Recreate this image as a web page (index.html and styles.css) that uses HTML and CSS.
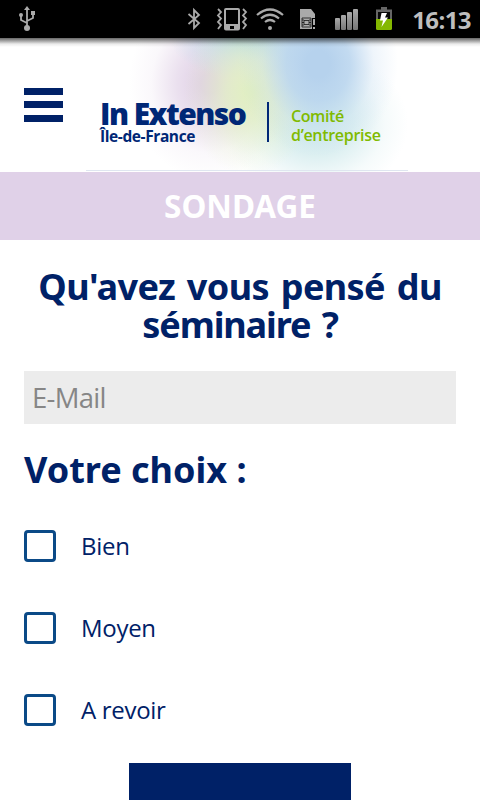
FILE: index.html
```html
<!DOCTYPE html>
<html lang="fr">
  <head>
    <meta charset="UTF-8" />
    <meta name="viewport" content="width=device-width, initial-scale=1.0" />
    <title>Sondage - In Extenso</title>
    <link rel="stylesheet" href="styles.css">
  </head>
  <body>
    <!-- Barre système -->
    <div class="statusbar">
      <svg class="status-icons" width="400" height="38" viewBox="0 0 400 38" fill="none" stroke="#aaa" stroke-width="1.8">
        <!-- USB -->
        <path d="M27 9v19M27 23l-6-3v-5M27 21l6-3v-5" />
        <path d="M27 6l3 4h-6z" fill="#aaa" stroke="none" />
        <circle cx="27" cy="28" r="3" fill="#aaa" stroke="none" />
        <circle cx="21" cy="15" r="2" fill="#aaa" stroke="none" />
        <path d="M31 11h4v4h-4z" fill="#aaa" stroke="none" />
        <!-- Bluetooth -->
        <path d="M188.500 14l10.500 9-5 5V10l5 5-10.500 9" />
        <!-- Vibreur -->
        <path d="M218 9l3 3-3 3.500 3 3-3 3.500 3 3-3 4M243 9l3 3-3 3.500 3 3-3 3.500 3 3-3 4" />
        <rect x="225" y="9" width="14" height="20.500" rx="1" stroke-width="2" />
        <path d="M225 24h14v6h-14z" fill="#aaa" stroke="none" />
        <path d="M230 26h4v3h-4z" fill="#000" stroke="none" />
        <!-- Wifi -->
        <path d="M257 15q13-11 26 0M261 18.500q9-7.500 18 0M265 22q5-4 10 0" stroke-width="2.200" />
        <circle cx="270" cy="28" r="2" fill="#aaa" stroke="none" />
        <!-- Carte SIM -->
        <path d="M300 9h11l4 5v4h-3v11h-12z" fill="#aaa" stroke="none" />
        <path d="M302 18h9v9h-9zM304 20.500h5v4h-5zM302 20h2M302 22.500h2M302 25h2M309 20h2M309 22.500h2M309 25h2" stroke="#000" stroke-width="0.700" />
        <path d="M314 19v6M314 27v2" stroke-width="2" />
        <!-- Réseau -->
        <g fill="url(#bar)" stroke="none">
          <rect x="335" y="18" width="5" height="12" rx="1" />
          <rect x="341" y="15" width="5" height="15" rx="1" />
          <rect x="347" y="12" width="5" height="18" rx="1" />
          <rect x="353" y="9" width="5" height="21" rx="1" />
        </g>
        <!-- Batterie -->
        <path d="M381 7h6v2.500h5V19h-16V9.500h5z" fill="#666" stroke="none" />
        <path d="M378 12h12v7h-12z" fill="#080808" stroke="none" />
        <path d="M376 19h16v9.500q0 1.500-1.500 1.500h-13q-1.500 0-1.500-1.500z" fill="#84b800" stroke="none" />
        <path d="M381.500 13h5.500l-2 4.500h3l-6.500 9.500 1.500-6.500h-3z" fill="#fff" stroke="none" />
        <defs>
          <linearGradient id="bar" x2="0" y2="1">
            <stop stop-color="#aaa" />
            <stop offset="1" stop-color="#777" />
          </linearGradient>
        </defs>
      </svg>
      <span class="clock">16:13</span>
    </div>

    <!-- En-tête -->
    <header class="header">
      <button class="menu" aria-label="Menu">
        <span></span>
        <span></span>
        <span></span>
      </button>
      <div class="logo">
        <div class="brand">
          <div class="brand-name">In Extenso</div>
          <div class="brand-region">Île-de-France</div>
        </div>
        <div class="comite">
          <div class="comite-top">Comité</div>
          <div class="comite-bottom">d’entreprise</div>
        </div>
      </div>
    </header>

    <h1 class="banner">SONDAGE</h1>

    <!-- Formulaire -->
    <main class="content">
      <form>
        <h2 class="question"><span class="q1">Qu'avez vous pensé du</span><span class="q2">séminaire ?</span></h2>
        <input class="email" type="text" name="email" placeholder="E-Mail" />
        <h2 class="choice-title">Votre choix :</h2>
        <label class="choice"><input type="checkbox" name="bien" /><span>Bien</span></label>
        <label class="choice"><input type="checkbox" name="moyen" /><span>Moyen</span></label>
        <label class="choice"><input type="checkbox" name="revoir" /><span>A revoir</span></label>
        <button class="submit" type="submit" aria-label="Valider"></button>
      </form>
    </main>
  </body>
</html>
```

FILE: styles.css
```css
/* Styles de base */
* {
  box-sizing: border-box;
  margin: 0;
  padding: 0;
}

body {
  width: 480px;
  height: 800px;
  overflow: hidden;
  font-family: "Open Sans", "Noto Sans", sans-serif;
  background-color: #fff;
  color: #002167;
}

/* Barre système */
.statusbar {
  display: flex;
  justify-content: space-between;
  height: 38px;
  background-color: #000;
}

.status-icons {
  display: block;
}

.clock {
  padding-right: 9px;
  font-size: 24px;
  font-weight: 700;
  line-height: 39px;
  letter-spacing: -0.6px;
  color: #bebebe;
}

/* En-tête */
.header {
  display: flex;
  align-items: flex-start;
  height: 134px;
  padding-left: 24px;
  background:
    linear-gradient(rgba(0, 0, 0, 0.6), rgba(0, 0, 0, 0.35) 3px, rgba(0, 0, 0, 0.08) 6px, transparent 9px),
    linear-gradient(#dfe6f0, #dfe6f0) 86px 132px / 322px 1px no-repeat,
    radial-gradient(ellipse 80px 92px at 318px 26px, rgba(182, 210, 237, 1) 15%, rgba(184, 212, 238, 0.85) 40%, rgba(190, 215, 240, 0.25) 70%, rgba(190, 215, 240, 0) 100%),
    radial-gradient(ellipse 66px 84px at 250px 54px, rgba(225, 239, 194, 1) 5%, rgba(225, 239, 194, 0.75) 35%, rgba(225, 239, 194, 0.2) 75%, rgba(225, 239, 194, 0) 100%),
    radial-gradient(ellipse 80px 42px at 250px 0, rgba(185, 218, 234, 1) 20%, rgba(185, 218, 234, 0.5) 55%, rgba(185, 218, 234, 0) 100%),
    radial-gradient(ellipse 80px 96px at 209px 46px, rgba(224, 208, 230, 1) 10%, rgba(224, 208, 230, 0.65) 40%, rgba(224, 208, 230, 0.15) 72%, rgba(224, 208, 230, 0) 100%),
    radial-gradient(ellipse 92px 76px at 316px 86px, rgba(208, 234, 236, 1) 10%, rgba(208, 234, 236, 0.75) 40%, rgba(208, 234, 236, 0.2) 75%, rgba(208, 234, 236, 0) 100%),
    #fff;
}

.menu {
  display: flex;
  flex-direction: column;
  gap: 6px;
  width: 39px;
  margin-top: 50px;
  border: none;
  background: none;
}

.menu span {
  display: block;
  width: 39px;
  height: 7px;
  background-color: #002167;
}

.menu span:last-child {
  margin-top: 1px;
}

.logo {
  display: flex;
  margin: 64px 0 0 37px;
  color: #002776;
}

.brand {
  width: 169px;
  height: 40px;
  border-right: 2px solid #002776;
  white-space: nowrap;
}

.brand-name {
  font-size: 30px;
  font-weight: 800;
  line-height: 23px;
  letter-spacing: -1.55px;
}

.brand-region {
  font-size: 15.5px;
  font-weight: 700;
  line-height: 22px;
  letter-spacing: -0.4px;
}

.comite {
  margin: 5px 0 0 22px;
  font-size: 16px;
  font-weight: 600;
  line-height: 19px;
  white-space: nowrap;
  color: #80ba00;
}

.comite-top {
  letter-spacing: -0.4px;
}

.comite-bottom {
  letter-spacing: -0.3px;
}

/* Bandeau */
.banner {
  height: 68px;
  background-color: #e0d1e8;
  color: #fff;
  font-family: "Noto Sans", sans-serif;
  font-size: 31.5px;
  font-weight: 700;
  line-height: 67px;
  text-align: center;
}

/* Contenu principal */
.content {
  padding: 28px 24px 0;
}

.question,
.choice-title {
  font-family: "Noto Sans", sans-serif;
  font-size: 36px;
  font-weight: 700;
  line-height: 38px;
  white-space: nowrap;
}

.question {
  text-align: center;
}

.question span {
  display: block;
}

.q1 {
  letter-spacing: -0.6px;
  word-spacing: 3px;
}

.q2 {
  letter-spacing: -1.1px;
  word-spacing: 3px;
}

.email {
  display: block;
  width: 432px;
  height: 53px;
  margin-top: 27px;
  padding: 0 8px;
  border: none;
  background-color: #ececec;
  font-family: "Open Sans", sans-serif;
  font-size: 27.5px;
  letter-spacing: -0.7px;
  color: #002167;
}

.email::placeholder {
  color: #868686;
}

.choice-title {
  margin: 27px 0 41px;
}

.choice {
  display: flex;
  align-items: center;
  gap: 25px;
  height: 32px;
  margin-bottom: 50px;
  font-size: 24px;
  letter-spacing: -0.3px;
}

.choice span {
  padding-bottom: 1px;
}

.choice input {
  appearance: none;
  width: 32px;
  height: 32px;
  border: 3px solid #0b4a87;
  border-radius: 4px;
  background-color: #fff;
}

.submit {
  display: block;
  width: 222px;
  height: 60px;
  margin: -13px auto 0;
  border: none;
  background-color: #002167;
}
```
